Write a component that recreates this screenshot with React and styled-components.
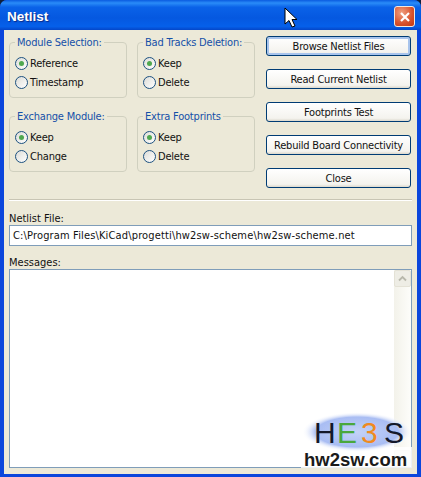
import styled, { createGlobalStyle } from "styled-components";

const GlobalStyle = createGlobalStyle`
  html, body {
    margin: 0;
    padding: 0;
    background: #10203a;
  }
  * {
    box-sizing: border-box;
  }
`;

const Win = styled.div`
  position: relative;
  width: 421px;
  height: 477px;
  display: flex;
  flex-direction: column;
  overflow: hidden;
  background: #0b46dc;
  border-radius: 7px 7px 0 0;
  font-family: "DejaVu Sans Condensed", "DejaVu Sans", sans-serif;
  font-stretch: condensed;
`;

const TitleBar = styled.div`
  height: 30px;
  flex: none;
  display: flex;
  align-items: center;
  justify-content: space-between;
  padding: 3px 6px 0 7px;
  background: linear-gradient(180deg, #0a5be0 0%, #2a8cf8 10%, #0a62e8 24%, #0558e0 60%, #0560ea 88%, #0446c8 100%);
`;

const Title = styled.span`
  color: #fff;
  font-family: "Liberation Sans", sans-serif;
  font-weight: bold;
  font-size: 13.5px;
  text-shadow: 1px 1px 1px #0a2a88;
`;

const CloseBtn = styled.div`
  width: 21px;
  height: 21px;
  border: 1px solid #f0e8e0;
  border-radius: 3px;
  background: radial-gradient(circle at 35% 30%, #f0a080, #d8512c 60%, #c03810);
  display: flex;
  align-items: center;
  justify-content: center;
`;

const Body = styled.div`
  flex: 1;
  margin: 0 4px 3px 4px;
  padding: 6px 5px 6px 5px;
  background: #ece9d8;
  display: flex;
  flex-direction: column;
  min-height: 0;
`;

const TopRow = styled.div`
  display: flex;
  align-items: flex-start;
  gap: 11px;
`;

const Groups = styled.div`
  width: 246px;
  display: grid;
  grid-template-columns: 118px 118px;
  column-gap: 10px;
  row-gap: 12px;
`;

const Group = styled.fieldset`
  margin: 0;
  padding: 5px 0 0 5px;
  height: 62px;
  border: 1px solid #d0d0bf;
  border-radius: 4px;
`;

const Legend = styled.legend`
  color: #1550a8;
  font-size: 11px;
  letter-spacing: -0.2px;
  padding: 0 2px;
  margin-left: 0;
  line-height: 13px;
`;

const Option = styled.div`
  display: flex;
  align-items: center;
  gap: 2px;
  height: 19px;
  font-size: 11px;
  letter-spacing: -0.2px;
  color: #111;
`;

const Radio = styled.span`
  width: 13px;
  height: 13px;
  border-radius: 50%;
  border: 1px solid #1c5180;
  background: linear-gradient(135deg, #dcdcd7, #ffffff);
  display: flex;
  align-items: center;
  justify-content: center;
  &::after {
    content: "";
    display: ${(p) => (p.$on ? "block" : "none")};
    width: 5px;
    height: 5px;
    border-radius: 50%;
    background: #4fa84f;
  }
`;

const Buttons = styled.div`
  width: 145px;
  display: flex;
  flex-direction: column;
  gap: 13px;
`;

const Button = styled.div`
  height: 20px;
  border: 1px solid #003c74;
  border-radius: 3px;
  background: linear-gradient(180deg, #fff, #f4f3ee 85%, #dcd8cc);
  box-shadow: ${(p) => (p.$focus ? "inset 0 0 0 2px #a8c4ec" : "none")};
  display: flex;
  align-items: center;
  justify-content: center;
  font-size: 11px;
  letter-spacing: -0.2px;
  color: #111;
`;

const Separator = styled.div`
  height: 2px;
  margin-top: 11px;
  background: #c8c5b4;
  border-bottom: 1px solid #fff;
`;

const FieldLabel = styled.div`
  font-size: 11px;
  line-height: 13px;
  color: #111;
  margin-top: ${(p) => p.$top}px;
`;

const FileInput = styled.div`
  width: 403px;
  height: 21px;
  border: 1px solid #7f9db9;
  background: #fff;
  padding-left: 3px;
  display: flex;
  align-items: center;
  font-size: 11px;
  letter-spacing: 0.15px;
  color: #111;
`;

const Messages = styled.div`
  width: 403px;
  flex: 1;
  border: 1px solid #7f9db9;
  background: #fff;
  display: flex;
  justify-content: flex-end;
  min-height: 0;
`;

const ScrollTrack = styled.div`
  width: 17px;
  background: linear-gradient(90deg, #f3f2ea, #fdfdfa);
  display: flex;
  flex-direction: column;
  justify-content: space-between;
`;

const ScrollArrow = styled.div`
  height: 17px;
  border: 1px solid #e4e2d6;
  border-radius: 2px;
  background: #eeede5;
  display: flex;
  align-items: center;
  justify-content: center;
`;

const Logo = styled.svg`
  position: absolute;
  left: 301px;
  top: 411px;
`;

const Cursor = styled.svg`
  position: absolute;
  left: 284px;
  top: 7px;
`;

const Chevron = ({ down }) => (
  <svg width="9" height="7" viewBox="0 0 9 7">
    <path d={down ? "M1 1.5 L4.5 5 L8 1.5" : "M1 5.5 L4.5 2 L8 5.5"} fill="none" stroke="#b8b8ac" strokeWidth="1.8" />
  </svg>
);

const groups = [
  ["Module Selection:", ["Reference", "Timestamp"]],
  ["Bad Tracks Deletion:", ["Keep", "Delete"]],
  ["Exchange Module:", ["Keep", "Change"]],
  ["Extra Footprints", ["Keep", "Delete"]],
];

const buttons = ["Browse Netlist Files", "Read Current Netlist", "Footprints Test", "Rebuild Board Connectivity", "Close"];

const App = () => {
  return (
    <Win>
      <GlobalStyle />
      <TitleBar>
        <Title>Netlist</Title>
        <CloseBtn>
          <svg width="12" height="12" viewBox="0 0 12 12">
            <path d="M2 2 L10 10 M10 2 L2 10" stroke="#fff" strokeWidth="2.2" />
          </svg>
        </CloseBtn>
      </TitleBar>
      <Body>
        <TopRow>
          <Groups>
            {groups.map(([title, opts]) => (
              <Group key={title}>
                <Legend>{title}</Legend>
                {opts.map((o, i) => (
                  <Option key={o}>
                    <Radio $on={i === 0} />
                    {o}
                  </Option>
                ))}
              </Group>
            ))}
          </Groups>
          <Buttons>
            {buttons.map((b, i) => (
              <Button key={b} $focus={i === 0}>
                {b}
              </Button>
            ))}
          </Buttons>
        </TopRow>
        <Separator />
        <FieldLabel $top={11}>Netlist File:</FieldLabel>
        <FileInput>C:\Program Files\KiCad\progetti\hw2sw-scheme\hw2sw-scheme.net</FileInput>
        <FieldLabel $top={10}>Messages:</FieldLabel>
        <Messages>
          <ScrollTrack>
            <ScrollArrow>
              <Chevron />
            </ScrollArrow>
            <ScrollArrow>
              <Chevron down />
            </ScrollArrow>
          </ScrollTrack>
        </Messages>
      </Body>
      <Logo width="112" height="60" viewBox="0 0 112 60">
        <defs>
          <radialGradient id="glow">
            <stop offset="0%" stopColor="#c4d2f8" />
            <stop offset="75%" stopColor="#a9bdf3" />
            <stop offset="100%" stopColor="#ffffff" stopOpacity="0" />
          </radialGradient>
        </defs>
        <rect x="0" y="36" width="111" height="21" fill="#fff" fillOpacity="0.85" />
        <ellipse cx="56" cy="21" rx="55" ry="20" fill="url(#glow)" />
        <text x="13" y="32" fontFamily="Liberation Sans" fontSize="30" fill="#14182a">H</text>
        <text x="36" y="32" fontFamily="Liberation Sans" fontSize="30" fill="#4aa83c">E</text>
        <text x="60" y="32" fontFamily="Liberation Sans" fontSize="30" fill="#f08a20">3</text>
        <text x="83" y="32" fontFamily="Liberation Sans" fontSize="30" fill="#14182a">S</text>
        <text x="3" y="55" fontFamily="Liberation Sans" fontWeight="bold" fontSize="18.5" fill="#1a1a1a">hw2sw.com</text>
      </Logo>
      <Cursor width="14" height="22" viewBox="0 0 14 22">
        <path d="M1 1 L1 17 L5 13.5 L8 20 L11 19 L8 12.5 L13 12.5 Z" fill="#fff" stroke="#000" strokeWidth="1" />
      </Cursor>
    </Win>
  );
};

export default App;
